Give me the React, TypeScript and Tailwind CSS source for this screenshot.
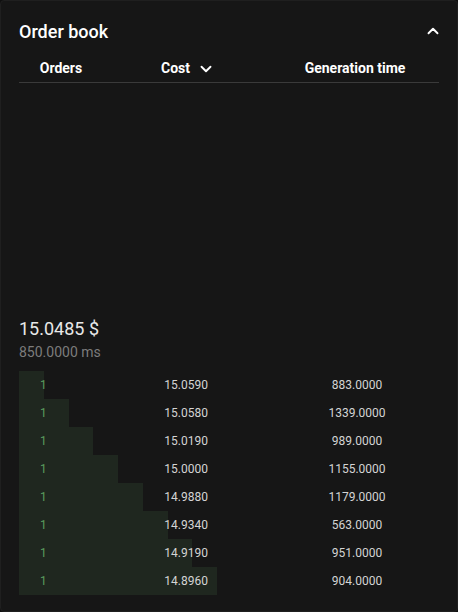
import { ChevronDown, ChevronUp } from "lucide-react";

const rows = [
  { orders: 1, cost: "15.0590", time: "883.0000" },
  { orders: 1, cost: "15.0580", time: "1339.0000" },
  { orders: 1, cost: "15.0190", time: "989.0000" },
  { orders: 1, cost: "15.0000", time: "1155.0000" },
  { orders: 1, cost: "14.9880", time: "1179.0000" },
  { orders: 1, cost: "14.9340", time: "563.0000" },
  { orders: 1, cost: "14.9190", time: "951.0000" },
  { orders: 1, cost: "14.8960", time: "904.0000" },
];

export default function App() {
  return (
    <div className="w-[458px] h-[612px] bg-[#0f0f0f] font-['Roboto',sans-serif]">
      <div className="flex flex-col h-full bg-[#161616] border border-[#1f1f1f] rounded-[4px] px-[18px] pb-[16px]">
        <div className="flex items-center justify-between h-[54px] pt-[6px]">
          <h1 className="text-[18px] font-medium text-white">Order book</h1>
          <ChevronUp size={18} strokeWidth={2.5} className="text-white mr-[-3px]" />
        </div>

        <div className="grid grid-cols-[84px_112px_1fr] items-center h-[28px] border-b border-[#3a3a3a] text-[14px] font-bold text-white">
          <div className="text-center">Orders</div>
          <div className="flex items-center justify-end gap-[7px]">
            <span>Cost</span>
            <ChevronDown size={18} strokeWidth={2.5} />
          </div>
          <div className="text-center pl-[56px]">Generation time</div>
        </div>

        <div className="flex-1" />

        <div className="flex flex-col mb-[7px]">
          <div className="h-[24px] flex items-center text-[18px] text-[#e8e8e8]">15.0485 $</div>
          <div className="h-[24px] flex items-center text-[14px] text-[#7c7c7c]">850.0000 ms</div>
        </div>

        <div className="flex flex-col">
          {rows.map((r, i) => (
            <div key={i} className="relative grid grid-cols-[84px_105px_1fr] items-center h-[28px] text-[12px]">
              <div
                className="absolute left-0 top-0 bottom-0 bg-[#1f271f]"
                style={{ width: Math.round(24.75 * (i + 1)) }}
              />
              <div className="relative pl-[21px] text-[#5a9c5d]">{r.orders}</div>
              <div className="relative text-right text-[#d4d4d4]">{r.cost}</div>
              <div className="relative text-center pl-[67px] text-[#d4d4d4]">{r.time}</div>
            </div>
          ))}
        </div>
      </div>
    </div>
  );
}
